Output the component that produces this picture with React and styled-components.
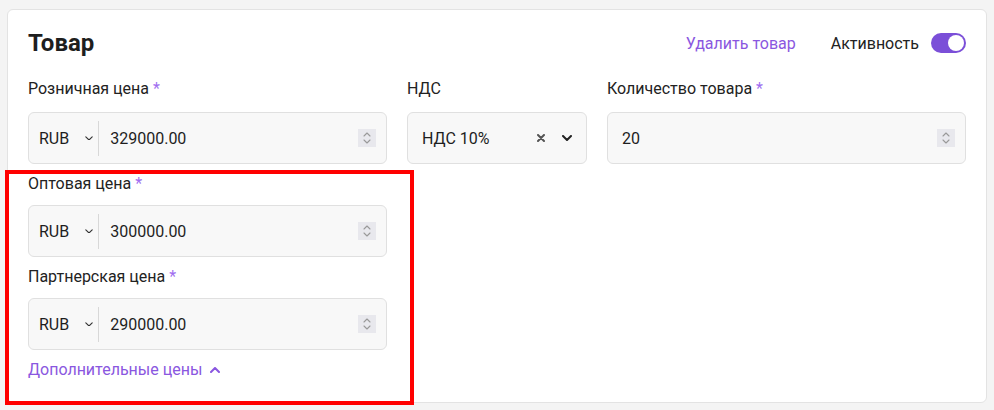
import React from "react";
import styled, { createGlobalStyle } from "styled-components";

const accent = "#8a57e0";

const GlobalStyle = createGlobalStyle`
  body {
    margin: 0;
    background: #f4f4f4;
    font-family: Roboto, "Liberation Sans", sans-serif;
    color: #222;
  }
`;

const ChevronDown = ({ size = 8, stroke = "#333", width = 1.5 }) => (
  <svg width={size} height={size * 0.6} viewBox="0 0 10 6" fill="none">
    <path d="M1 1l4 4 4-4" stroke={stroke} strokeWidth={width} strokeLinecap="round" strokeLinejoin="round" />
  </svg>
);

const ChevronUp = ({ size = 10, stroke = accent, width = 2 }) => (
  <svg width={size} height={size * 0.6} viewBox="0 0 10 6" fill="none">
    <path d="M1 5l4-4 4 4" stroke={stroke} strokeWidth={width} strokeLinecap="round" strokeLinejoin="round" />
  </svg>
);

const Cross = () => (
  <svg width="8" height="8" viewBox="0 0 8 8" fill="none">
    <path d="M1 1l6 6M7 1l-6 6" stroke="#555" strokeWidth="2" strokeLinecap="round" />
  </svg>
);

const Spinner = () => (
  <SpinBox>
    <svg width="10" height="14" viewBox="0 0 10 14" fill="none">
      <path d="M2 5l3-3 3 3M2 9l3 3 3-3" stroke="#999" strokeWidth="1.1" strokeLinecap="round" strokeLinejoin="round" />
    </svg>
  </SpinBox>
);

const PriceField = ({ label, value, gap }) => (
  <Field>
    <Label $gap={gap}>
      {label} <Req>*</Req>
    </Label>
    <InputBox>
      <Currency>
        RUB
        <ChevronDown size={8} stroke="#333" width={1.4} />
      </Currency>
      <Divider />
      <Value>{value}</Value>
      <Spinner />
    </InputBox>
  </Field>
);

const App = () => {
  return (
    <Page>
      <GlobalStyle />
      <Card>
        <Header>
          <Title>Товар</Title>
          <Actions>
            <LinkText>Удалить товар</LinkText>
            <ToggleRow>
              Активность
              <Toggle $on />
            </ToggleRow>
          </Actions>
        </Header>
        <TopRow>
          <PriceField label="Розничная цена" value="329000.00" />
          <Field>
            <Label>НДС</Label>
            <InputBox>
              <Value>НДС 10%</Value>
              <SelectIcons>
                <Cross />
                <ChevronDown size={10} stroke="#222" width={2} />
              </SelectIcons>
            </InputBox>
          </Field>
          <Field>
            <Label>
              Количество товара <Req>*</Req>
            </Label>
            <InputBox>
              <Value>20</Value>
              <Spinner />
            </InputBox>
          </Field>
        </TopRow>
        <LeftColumn>
          <PriceField label="Оптовая цена" value="300000.00" gap={11} />
          <PriceField label="Партнерская цена" value="290000.00" gap={11} />
          <MoreLink>
            Дополнительные цены
            <ChevronUp />
          </MoreLink>
        </LeftColumn>
        <Highlight />
      </Card>
    </Page>
  );
};

const Page = styled.div`
  padding: 9px 7px 7px;
`;

const Card = styled.div`
  position: relative;
  box-sizing: border-box;
  width: 980px;
  height: 394px;
  background: #fff;
  border: 1px solid #e3e3e3;
  border-radius: 6px;
  padding: 17px 20px 0;
`;

const Header = styled.div`
  display: flex;
  align-items: center;
  justify-content: space-between;
  height: 32px;
  margin-bottom: 20px;
`;

const Title = styled.h2`
  margin: 0;
  font-size: 24px;
  font-weight: 700;
  color: #1e1e1e;
`;

const Actions = styled.div`
  display: flex;
  align-items: center;
  gap: 35px;
`;

const LinkText = styled.span`
  font-size: 16px;
  color: ${accent};
`;

const ToggleRow = styled.div`
  display: flex;
  align-items: center;
  gap: 12px;
  font-size: 16px;
  color: #222;
`;

const Toggle = styled.span`
  position: relative;
  display: inline-block;
  width: 35px;
  height: 20px;
  border-radius: 10px;
  background: ${(p) => (p.$on ? "#7b4fd8" : "#ccc")};

  &::after {
    content: "";
    position: absolute;
    top: 2px;
    left: ${(p) => (p.$on ? "17px" : "2px")};
    width: 16px;
    height: 16px;
    border-radius: 50%;
    background: #fff;
  }
`;

const TopRow = styled.div`
  display: grid;
  grid-template-columns: 359px 180px 359px;
  column-gap: 20px;
  margin-bottom: 10px;
`;

const LeftColumn = styled.div`
  width: 359px;
  display: flex;
  flex-direction: column;
  gap: 10px;
`;

const Field = styled.div`
  display: flex;
  flex-direction: column;
`;

const Label = styled.div`
  font-size: 16px;
  line-height: 20px;
  margin-bottom: ${(p) => p.$gap ?? 13}px;
  color: #222;
`;

const Req = styled.span`
  color: #a06ef0;
`;

const InputBox = styled.div`
  box-sizing: border-box;
  height: 52px;
  display: flex;
  align-items: center;
  background: #f8f8f8;
  border: 1px solid #e0e0e0;
  border-radius: 6px;
  padding: 0 10px 0 14px;
  font-size: 16px;
  color: #1e1e1e;
`;

const Currency = styled.div`
  display: flex;
  align-items: center;
  gap: 16px;
  margin-left: -4px;
  margin-right: 5px;
`;

const Divider = styled.span`
  width: 1px;
  height: 35px;
  background: #d8d8d8;
  margin-right: 11px;
`;

const Value = styled.span`
  flex: 1;
`;

const SpinBox = styled.span`
  display: flex;
  align-items: center;
  justify-content: center;
  width: 18px;
  height: 18px;
  background: #e8e8ed;
`;

const SelectIcons = styled.span`
  display: flex;
  align-items: center;
  gap: 17px;
  margin-right: 4px;
`;

const MoreLink = styled.div`
  display: flex;
  align-items: center;
  gap: 8px;
  font-size: 16px;
  line-height: 20px;
  color: ${accent};
`;

const Highlight = styled.div`
  position: absolute;
  left: -3px;
  top: 160px;
  width: 409px;
  height: 235px;
  box-sizing: border-box;
  border: 4px solid #ff0000;
  pointer-events: none;
`;

export default App;
